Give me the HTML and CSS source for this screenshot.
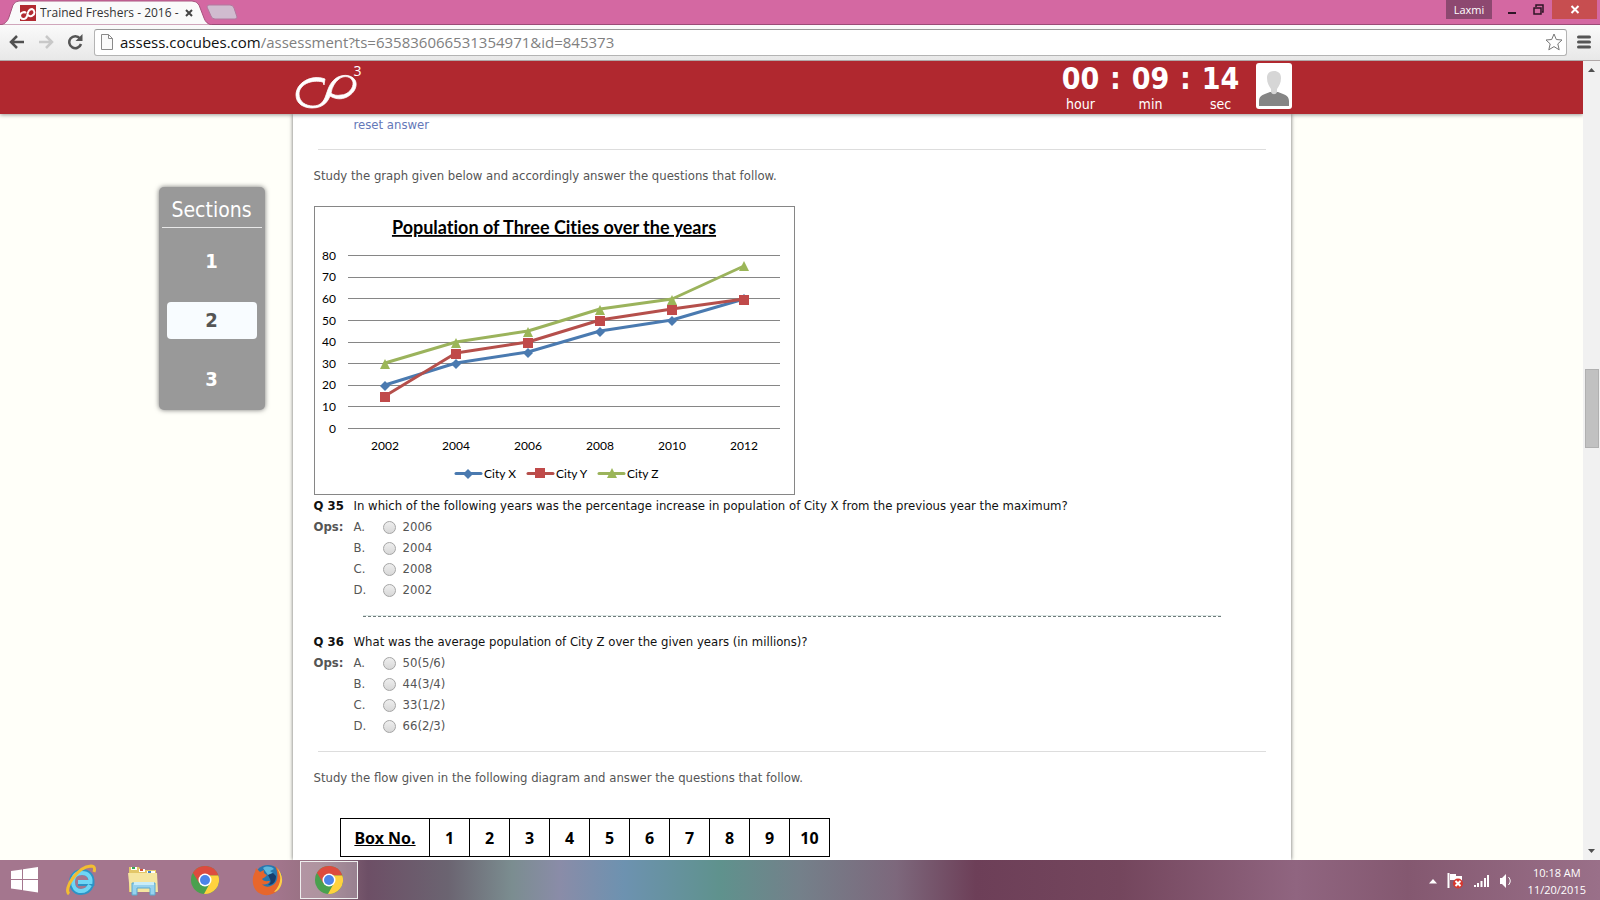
FILE: index.html
```html
<!DOCTYPE html>
<html lang="en">
<head>
<meta charset="utf-8">
<title>Trained Freshers - 2016</title>
<link rel="stylesheet" href="styles.css">
</head>
<body>
<svg width="0" height="0" class="defs" aria-hidden="true">
  <symbol id="cloop" viewBox="0 0 68 48">
    <path fill="#fff" stroke="#fff" stroke-width=".8" d="M30 18C16 13 1 22 1 34C1 43 9 47 17 47C29 47 33 40 35 35C40 38 46 39 52 36C60 32 63 24 60 19C56 13 46 13 40 18C34 23 33 29 31 34C29 40 26 45 18 45C11 45 4 41 4 33C4 24 16 18 28 21L29 24ZM36 32C37 26 40 21 44 18C49 14 56 15 58 21C59 27 53 34 46 34C42 35 38 34 36 32Z"/>
  </symbol>
  <symbol id="chrome" viewBox="0 0 30 30">
    <circle cx="15" cy="15" r="14" fill="#4aa04e"/>
    <path d="M15 15L3 7.800A14 14 0 0 1 28.300 10.500H15Z" fill="#dd4b3e"/>
    <path d="M15 10.500H28.300A14 14 0 0 1 14 29L20 18Z" fill="#ffd23e"/>
    <path d="M2.900 7.800L9.500 18.500L15 10Z" fill="#dd4b3e"/>
    <circle cx="15" cy="15" r="6.500" fill="#fff"/><circle cx="15" cy="15" r="5" fill="#4c84e8"/>
  </symbol>
</svg>

<header class="browser">
  <div class="tabstrip">
    <div class="tab">
      <svg class="tab-shape" viewBox="0 0 212 25" preserveAspectRatio="none"><path d="M0 25C6 24 8 20 9 17L13 5Q15 1 19 1H192Q197 1 199 5L204 18Q206 24 212 25Z" fill="#fafafa" stroke="#a7527d"/></svg>
      <svg class="favicon" viewBox="0 0 16 16"><path fill="#b12a31" d="M0 0H16V16H0Z"/><path fill="none" stroke="#fff" stroke-width="2" d="M6 8C4 6 0 8 0 11C1 15 6 15 7 11C8 5 10 4 12 4C15 5 15 9 13 10C11 12 9 11 8 10"/></svg>
      <span class="tab-title">Trained Freshers - 2016 -</span>
      <button class="tab-close" aria-label="Close tab"><svg width="8" height="8" viewBox="0 0 8 8"><path d="M1 1L7 7M7 1L1 7" stroke="#444" stroke-width="2"/></svg></button>
    </div>
    <button class="newtab" aria-label="New tab"><svg width="32" height="16" viewBox="0 0 32 16"><path d="M3 1H24Q27 1 28 4L31 13Q31 15 29 15H9Q6 15 5 12L1 3Q1 1 3 1Z" fill="#d0bccf" stroke="#b2799f"/></svg></button>
    <div class="window-buttons">
      <button class="user">Laxmi</button>
      <button class="win" aria-label="Minimize"><svg width="10" height="10" viewBox="0 0 10 10"><path d="M1 8H9" stroke="#2e1526" stroke-width="2"/></svg></button>
      <button class="win" aria-label="Restore"><svg width="11" height="11" viewBox="0 0 11 11"><path d="M1 4H8V10H1ZM3 3V1H10V8H9" fill="none" stroke="#2e1526" stroke-width="1.500"/></svg></button>
      <button class="win close" aria-label="Close"><svg width="10" height="9" viewBox="0 0 10 9"><path d="M1.500 1L8.500 8M8.500 1L1.500 8" stroke="#fff" stroke-width="2"/></svg></button>
    </div>
  </div>
  <div class="toolbar">
    <button aria-label="Back"><svg width="16" height="16" viewBox="0 0 16 16"><path d="M15 8H2M8 2L2 8L8 14" fill="none" stroke="#505050" stroke-width="2.500"/></svg></button>
    <button aria-label="Forward"><svg width="16" height="16" viewBox="0 0 16 16"><path d="M1 8H14M8 2L14 8L8 14" fill="none" stroke="#c8c8c8" stroke-width="2.500"/></svg></button>
    <button aria-label="Reload"><svg width="16" height="16" viewBox="0 0 16 16"><path d="M13 4.500A6 6 0 1 0 14 10" fill="none" stroke="#555" stroke-width="2.500"/><path d="M15.500 0V7H8.500Z" fill="#555"/></svg></button>
    <div class="omnibox">
      <svg width="12" height="16" viewBox="0 0 12 16"><path d="M.5 .5H7.500L11.500 4.500V15.500H.5ZM7.500 .5V4.500H11.500" fill="#fafafa" stroke="#8a8a8a"/></svg>
      <div class="url"><span class="host">assess.cocubes.com</span>/assessment?ts=635836066531354971&amp;id=845373</div>
      <button class="star" aria-label="Bookmark"><svg width="18" height="18" viewBox="0 0 18 18"><path d="M9 1L11.300 6.500L17 7L12.800 10.900L14.200 16.800L9 13.600L3.800 16.800L5.200 10.900L1 7L6.700 6.500Z" fill="#fff" stroke="#777" stroke-linejoin="round"/></svg></button>
    </div>
    <button class="menu" aria-label="Menu"><svg width="14" height="14" viewBox="0 0 14 14"><path d="M1.500 2H12.500M1.500 7H12.500M1.500 12H12.500" stroke="#555" stroke-width="3" stroke-linecap="round"/></svg></button>
  </div>
</header>

<div class="viewport">
  <div class="page">
    <header class="banner">
      <div class="banner-inner">
        <div class="logo"><svg width="68" height="48" aria-label="cocubes"><use href="#cloop"/></svg><sup>3</sup></div>
        <div class="timer">
          <div class="unit"><b>00</b><span>hour</span></div><b class="colon">:</b>
          <div class="unit"><b>09</b><span>min</span></div><b class="colon">:</b>
          <div class="unit"><b>14</b><span>sec</span></div>
        </div>
        <svg class="avatar" width="36" height="46" viewBox="0 0 36 46"><rect width="36" height="46" rx="3" fill="#fff"/><path d="M3 43V38C3 32 9 31 14 29H22C27 31 33 32 33 38V43Z" fill="#858585"/><path d="M11 15C11 10 14 8 18 8S25 10 25 15C25 20 23 23 21 26V29C20 32 16 32 15 29V26C13 23 11 20 11 15Z" fill="#d6d6d6"/></svg>
      </div>
    </header>
    <div class="columns">
      <aside>
        <nav class="sections">
          <h2>Sections</h2>
          <button>1</button>
          <button class="current">2</button>
          <button>3</button>
        </nav>
      </aside>
      <main class="paper">
        <p class="reset"><a href="#q34">reset answer</a></p>
        <hr>
        <p>Study the graph given below and accordingly answer the questions that follow.</p>
        <svg class="chart" width="481" height="289" viewBox="0 0 481 289" role="img" aria-label="Population of Three Cities over the years">
          <rect x=".5" y=".5" width="480" height="288" fill="#fff" stroke="#868686"/>
          <text class="chart-title" x="240" y="28">Population of Three Cities over the years</text>
          <path class="gridlines" d="M34 49.500H466M34 71.500H466M34 92.500H466M34 114.500H466M34 136.500H466M34 157.500H466M34 179.500H466M34 200.500H466M34 222.500H466"/>
          <g class="ylabels"><text x="22" y="54">80</text><text x="22" y="75">70</text><text x="22" y="97">60</text><text x="22" y="119">50</text><text x="22" y="140">40</text><text x="22" y="162">30</text><text x="22" y="183">20</text><text x="22" y="205">10</text><text x="22" y="227">0</text></g>
          <g class="xlabels"><text x="71" y="244">2002</text><text x="142" y="244">2004</text><text x="214" y="244">2006</text><text x="286" y="244">2008</text><text x="358" y="244">2010</text><text x="430" y="244">2012</text></g>
          <defs>
            <path id="dia" d="M0 -5L5 0L0 5L-5 0Z" fill="#4a7ab0"/>
            <path id="sq" d="M-5 -5H5V5H-5Z" fill="#c04a4a"/>
            <path id="tri" d="M0 -5L5 5H-5Z" fill="#9bb658"/>
          </defs>
          <polyline class="line x" points="71,179 142,157 214,146 286,125 358,114 430,93"/>
          <g><use href="#dia" x="71" y="180"/><use href="#dia" x="142" y="158"/><use href="#dia" x="214" y="147"/><use href="#dia" x="286" y="126"/><use href="#dia" x="358" y="115"/><use href="#dia" x="430" y="93"/></g>
          <polyline class="line y" points="71,190 142,147 214,136 286,114 358,103 430,93"/>
          <g><use href="#sq" x="71" y="191"/><use href="#sq" x="142" y="148"/><use href="#sq" x="214" y="137"/><use href="#sq" x="286" y="115"/><use href="#sq" x="358" y="104"/><use href="#sq" x="430" y="94"/></g>
          <polyline class="line z" points="71,157 142,136 214,125 286,103 358,93 430,60"/>
          <g><use href="#tri" x="71" y="158"/><use href="#tri" x="142" y="137"/><use href="#tri" x="214" y="126"/><use href="#tri" x="286" y="104"/><use href="#tri" x="358" y="94"/><use href="#tri" x="430" y="60"/></g>
          <path class="line x" d="M142 267.500H167"/><use href="#dia" x="154" y="268"/><text x="170" y="272">City X</text>
          <path class="line y" d="M214 267.500H239"/><use href="#sq" x="226" y="267"/><text x="242" y="272">City Y</text>
          <path class="line z" d="M285 267.500H310"/><use href="#tri" x="298" y="267"/><text x="313" y="272">City Z</text>
        </svg>
        <section class="question">
          <b class="number">Q 35</b><p>In which of the following years was the percentage increase in population of City X from the previous year the maximum?</p>
          <b class="ops">Ops:</b>
          <div class="options">
            <label><span>A.</span><input type="radio" name="q35">2006</label>
            <label><span>B.</span><input type="radio" name="q35">2004</label>
            <label><span>C.</span><input type="radio" name="q35">2008</label>
            <label><span>D.</span><input type="radio" name="q35">2002</label>
          </div>
        </section>
        <hr class="dashed">
        <section class="question">
          <b class="number">Q 36</b><p>What was the average population of City Z over the given years (in millions)?</p>
          <b class="ops">Ops:</b>
          <div class="options">
            <label><span>A.</span><input type="radio" name="q36">50(5/6)</label>
            <label><span>B.</span><input type="radio" name="q36">44(3/4)</label>
            <label><span>C.</span><input type="radio" name="q36">33(1/2)</label>
            <label><span>D.</span><input type="radio" name="q36">66(2/3)</label>
          </div>
        </section>
        <hr class="after-question">
        <p>Study the flow given in the following diagram and answer the questions that follow.</p>
        <table class="boxes">
          <tr><th scope="row">Box No.</th><td>1</td><td>2</td><td>3</td><td>4</td><td>5</td><td>6</td><td>7</td><td>8</td><td>9</td><td>10</td></tr>
        </table>
      </main>
    </div>
  </div>
  <div class="scrollbar">
    <svg width="17" height="17" viewBox="0 0 17 17"><path d="M5 11L8.500 7L12 11Z" fill="#505050"/></svg>
    <div class="track"><div class="thumb"></div></div>
    <svg width="17" height="17" viewBox="0 0 17 17"><path d="M5 6L8.500 10L12 6Z" fill="#505050"/></svg>
  </div>
</div>

<footer class="taskbar">
  <button class="app start" aria-label="Start"><svg width="28" height="26" viewBox="0 0 28 26"><path fill="#fff" d="M0 4L11 2.500V12H0ZM12 2.300L27 0V12H12ZM0 13H11V23L0 21.500ZM12 13H27V25.500L12 23.300Z"/></svg></button>
  <button class="app" aria-label="Internet Explorer"><svg width="32" height="32" viewBox="0 0 32 32"><path d="M26 21C24 26 21 28 16 28C10 28 7 23 7 18C7 12 11 8 17 8C23 8 27 12 26.500 19H13" fill="none" stroke="#2d93c6" stroke-width="6"/><path d="M25 21C23 25 21 27 16 27C11 27 8 23 8 18C8 12 11 9 17 9C23 9 26 13 25.500 18H13" fill="none" stroke="#6fd6f5" stroke-width="4"/><path d="M4 30C-2 25 12 3 26 2C30 2 30 5 29 8" fill="none" stroke="#f2bd32" stroke-width="3"/></svg></button>
  <button class="app" aria-label="File Explorer"><svg width="32" height="32" viewBox="0 0 32 32"><path d="M2 3H12L14 6H29V28H2Z" fill="#e3c768"/><path d="M4 3H10V6H4ZM12 5H18V8H12ZM20 7H28V10H20Z" fill="#fff"/><path d="M5 3H8V5H5Z" fill="#32a852"/><path d="M13 5H16V7H13Z" fill="#d25436"/><path d="M21 7H24V9H21Z" fill="#3f82c8"/><path d="M1 9H30L31 28H3Z" fill="#f5e5a0"/><path d="M5 31V19H28V31H23V24H10V31Z" fill="#97d2ee" stroke="#5ba9cf"/><path d="M7 18H27V21H7Z" fill="#c9edf8"/></svg></button>
  <button class="app" aria-label="Chrome"><svg width="30" height="30"><use href="#chrome"/></svg></button>
  <button class="app" aria-label="Firefox"><svg width="32" height="32" viewBox="0 0 32 32"><circle cx="17" cy="15" r="14" fill="#2877ae"/><path d="M24 2C32 8 33 20 27 26C21 33 9 33 4 25C1 20 1 13 4 8L5 4L9 8L13 6C12 9 14 10 16 11C15 13 12 14 11 15C13 18 16 17 19 17C17 21 13 21 11 20C16 26 25 21 26 15C27 10 26 6 24 2Z" fill="#e7662c"/><path d="M25 3C32 9 33 19 28 25C27 26 25 28 23 28C28 23 30 17 29 12C28 8 27 5 25 3Z" fill="#fbd04b"/><path d="M12 4C15 2 20 2 23 5L19 7L22 9L17 11Z" fill="#5fb7dc"/><path d="M17 11L22 9L25 12C25 18 22 21 17 21C20 19 20 17 19 15Z" fill="#173d6c"/></svg></button>
  <button class="app active" aria-label="Chrome window"><svg width="30" height="30"><use href="#chrome"/></svg></button>
  <div class="tray">
    <svg width="10" height="6" viewBox="0 0 10 6"><path d="M1 5.500L5 1L9 5.500Z" fill="#fff"/></svg>
    <svg width="17" height="16" viewBox="0 0 17 16"><path d="M1.500 0V15" stroke="#fff" stroke-width="2"/><path d="M3 1H9V3H15V9H9V7H3Z" fill="#fff"/><circle cx="11" cy="10.500" r="5" fill="#d8372e"/><path d="M8.500 8L13.500 13M13.500 8L8.500 13" stroke="#fff" stroke-width="2"/></svg>
    <svg width="17" height="14" viewBox="0 0 17 14"><path d="M2 13V11M5 13V9M8.500 13V7M12 13V4M15 13V1" stroke="#fff" stroke-width="2"/></svg>
    <svg width="14" height="16" viewBox="0 0 14 16"><path d="M1 5H3L7 1V15L3 11H1Z" fill="#fff"/><path d="M9.500 4Q13 8 9.500 12" fill="none" stroke="#fff"/></svg>
    <div class="clock">10:18 AM<br>11/20/2015</div>
  </div>
</footer>
</body>
</html>
```
FILE: styles.css
```css
* { box-sizing: border-box; }

body {
  margin: 0;
  height: 100vh;
  display: flex;
  flex-direction: column;
  overflow: hidden;
  font: 13px/20px "DejaVu Sans Condensed", "Noto Sans", sans-serif;
  color: #555;
}

p, h2 { margin: 0; }
svg { display: block; flex: none; }
.defs { position: absolute; }

button {
  margin: 0;
  padding: 0;
  border: 0;
  background: none;
  font: inherit;
  color: inherit;
  display: flex;
  align-items: center;
  justify-content: center;
}

/* browser frame */
.tabstrip {
  height: 25px;
  display: flex;
  background: #d468a2;
  border-bottom: 1px solid #9b4b77;
}

.tab {
  position: relative;
  width: 212px;
  height: 25px;
  padding: 1px 19px 0 20px;
  display: flex;
  align-items: center;
  gap: 4px;
}

.tab-shape { position: absolute; inset: 0; width: 100%; height: 100%; }
.favicon { position: relative; width: 16px; height: 16px; }

.tab-title {
  position: relative;
  flex: 1;
  white-space: nowrap;
  overflow: hidden;
  font: 12px/16px "Open Sans", sans-serif;
  color: #333;
}

.tab-close { position: relative; }
.newtab { margin-left: -6px; width: 32px; }
.window-buttons { margin-left: auto; margin-right: 3px; display: flex; align-items: flex-start; }

.user {
  height: 19px;
  width: 46px;
  margin-right: 7px;
  background: #8d4870;
  color: #fff;
  font: 11px/19px "Open Sans", sans-serif;
}

.win { width: 26px; height: 19px; }
.win.close { width: 45px; margin-left: 1px; background: #c74e50; }

.toolbar {
  height: 36px;
  padding: 0 9px 1px;
  display: flex;
  align-items: center;
  gap: 13px;
  background: linear-gradient(#fafafa, #e8e8e8);
  border-bottom: 1px solid #b0a8a8;
}

.toolbar .menu { margin-left: -3px; }

.omnibox {
  flex: 1;
  height: 27px;
  margin-left: -2px;
  padding: 0 3px 0 6px;
  display: flex;
  align-items: center;
  gap: 7px;
  background: #fff;
  border: 1px solid #b4b4b4;
  border-top-color: #999;
  border-radius: 3px;
}

.url { flex: 1; font: 15px/20px "Open Sans", sans-serif; color: #808080; }
.host { color: #111; }

/* page area */
.viewport { flex: 1; min-height: 0; display: flex; }

.page {
  flex: 1;
  min-width: 0;
  display: flex;
  flex-direction: column;
  overflow: hidden;
  background: #fffff9;
}

.banner {
  position: relative;
  z-index: 1;
  background: #b0282f;
  box-shadow: 0 1px 4px rgba(0, 0, 0, .4);
}

.banner-inner {
  max-width: 1000px;
  height: 53px;
  margin: 0 auto;
  display: flex;
  align-items: flex-start;
  color: #fff;
}

.logo { display: flex; padding-left: 3px; margin-right: auto; }
.logo sup { margin-left: -9px; font: 14px/19px "Open Sans", sans-serif; }
.timer { display: flex; text-align: center; }
.timer b { font-size: 30px; line-height: 35px; }
.unit { width: 46px; display: flex; flex-direction: column; }
.unit span { font-size: 14px; line-height: 16px; }
.colon { width: 24px; }
.avatar { margin: 2px 0 0 12px; }

.columns {
  flex: 1;
  min-height: 0;
  display: grid;
  grid-template-columns: 1fr minmax(0, 998px) 1fr;
}

aside { display: flex; justify-content: flex-end; align-items: flex-start; }

.sections {
  width: 106px;
  margin: 73px 28px 0 0;
  padding: 10px 3px 12px;
  background: #999;
  border-radius: 5px;
  box-shadow: 0 0 5px #777;
  color: #fff;
  display: flex;
  flex-direction: column;
}

.sections h2 {
  margin-bottom: 15px;
  padding-bottom: 4px;
  border-bottom: 1px solid #e8e8e8;
  font-weight: normal;
  font-size: 21px;
  line-height: 26px;
  text-align: center;
}

.sections button {
  height: 37px;
  margin: 0 5px 22px;
  border-radius: 4px;
  font-weight: bold;
  font-size: 20px;
  line-height: 37px;
}

.sections button:last-child { margin-bottom: 0; }
.sections .current { background: #f8fcff; color: #555; }

.paper {
  padding: 1px 19px 0 21px;
  background: #fff;
  box-shadow: 0 0 4px #666;
}

.reset { padding-left: 40px; }
.reset a { color: #6478b8; text-decoration: none; }
hr { height: 1px; margin: 14px 6px 16px 4px; border: 0; background: #ddd; }
.after-question { margin-top: 15px; }

.chart { margin: 20px 0 0; font: 12px "Lato", sans-serif; fill: #000; }
.chart-title {
  font: bold 18px "Lato", sans-serif;
  font-variant-ligatures: none;
  text-anchor: middle;
  text-decoration: underline;
}
.gridlines { fill: none; stroke: #868686; }
.ylabels { text-anchor: end; }
.xlabels { text-anchor: middle; }
.line { fill: none; stroke-width: 3; stroke-linejoin: round; stroke-linecap: round; }
.line.x { stroke: #4a7ab0; }
.line.y { stroke: #b54f4b; }
.line.z { stroke: #9bb35c; }

.question { display: grid; grid-template-columns: 40px 1fr; padding-top: 1px; }
.question p, .number { color: #111; line-height: 20px; }
.ops { line-height: 21px; }
.options label { display: flex; align-items: center; line-height: 21px; }
.options span { width: 29px; }

.options input {
  appearance: none;
  width: 13px;
  height: 13px;
  margin: 1px 7px 0 0;
  border: 1px solid #a5a5a5;
  border-radius: 50%;
  background: linear-gradient(#eee, #d8d8d8);
}

.dashed { margin: 15px 51px 14px 49px; height: 2px; background: none; border-top: 1px solid #dce6e4; border-bottom: 1px dashed #6f7c7c; }

.boxes {
  margin: 30px 0 0 26px;
  border-collapse: collapse;
  font: bold 16px/22px "Noto Sans", sans-serif;
  color: #000;
  text-align: center;
}

.boxes th, .boxes td { width: 40px; height: 38px; padding: 0 0 0 1px; border: 1px solid #000; }
.boxes th { width: 89px; text-decoration: underline; }

.scrollbar { width: 17px; background: #f1f1f1; display: flex; flex-direction: column; }
.track { flex: 1; display: flex; flex-direction: column; padding: 0 1px 0 2px; }
.track::before { content: ""; flex: 292; }
.track::after { content: ""; flex: 396; }
.thumb { flex: 77; background: #c1c1c1; border: 1px solid #b0b0b0; }

/* taskbar */
.taskbar {
  height: 40px;
  display: flex;
  align-items: center;
  background: linear-gradient(90deg, #a4768e 0%, #a4768e 17%, #94707f 20%, #6d4f66 23%, #6b6471 28%, #7b8d90 32%, #8a8ca8 35%, #6d92b0 39%, #5f928d 45%, #74808a 50%, #7d687c 56%, #6d3f58 61%, #74465d 70%, #906580 81%, #845870 88%, #9a7089 100%);
}

.app { width: 62px; height: 40px; }
.app.start { width: 50px; }
.app.active { width: 58px; height: 38px; margin-left: 2px; border: 1px solid #eee; background: rgba(255, 255, 255, .25); }

.tray { margin-left: auto; padding: 1px 14px 0 0; display: flex; align-items: center; gap: 9px; }
.clock { margin-left: 6px; color: #fff; text-align: center; font: 11px/17px "Open Sans", sans-serif; }
```
